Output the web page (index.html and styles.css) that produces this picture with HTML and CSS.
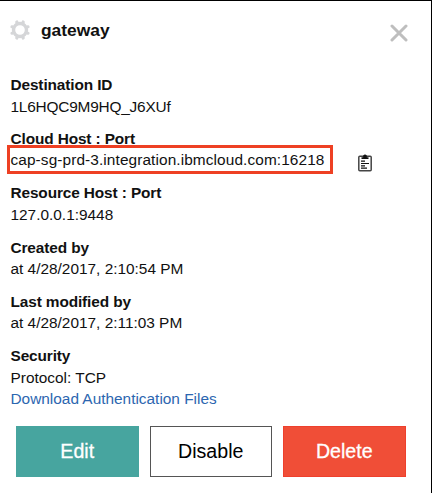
FILE: index.html
```html
<!DOCTYPE html>
<html lang="en">
<head>
<meta charset="utf-8">
<title>gateway</title>
<link rel="stylesheet" href="styles.css">
</head>
<body>
<main class="panel">
  <header class="header">
    <svg class="gear" viewBox="-10 -10 20 20">
      <circle r="6.5" fill="none" stroke="#d5d6d8" stroke-width="3.4"/>
      <g stroke="#d5d6d8" stroke-width="3.2" stroke-linecap="round">
        <path d="M3 -7.2L3.2 -8M7.2 -3L8 -3.2M7.2 3L8 3.2M3 7.2L3.2 8M-3 7.2L-3.2 8M-7.2 3L-8 3.2M-7.2 -3L-8 -3.2M-3 -7.2L-3.2 -8"/>
      </g>
    </svg>
    <h1 class="title">gateway</h1>
    <svg class="close" viewBox="0 0 18 18"><path d="M2 2L16 16M16 2L2 16"/></svg>
  </header>
  <dl class="details">
    <div class="item"><dt>Destination ID</dt><dd class="id">1L6HQC9M9HQ_J6XUf</dd></div>
    <div class="item"><dt>Cloud Host : Port</dt>
      <dd class="host-row"><span class="host">cap-sg-prd-3.integration.ibmcloud.com:16218</span>
        <svg class="clipboard" viewBox="0 0 14 18">
          <rect x=".8" y="2.2" width="12.4" height="14.6" rx="1" fill="#fff" stroke="#444" stroke-width="1.5"/>
          <path d="M3.5 5V3.2H5.2V1.6Q7 -.8 8.8 1.6V3.2H10.5V5Z" fill="#111"/>
          <path d="M3 7.2H7M3 9.5H11M3 11.9H7M3 14.2H9" stroke="#111" stroke-width="1.2"/>
        </svg>
      </dd></div>
    <div class="item"><dt>Resource Host : Port</dt><dd>127.0.0.1:9448</dd></div>
    <div class="item"><dt>Created by</dt><dd>at 4/28/2017, 2:10:54 PM</dd></div>
    <div class="item"><dt>Last modified by</dt><dd>at 4/28/2017, 2:11:03 PM</dd></div>
    <div class="item"><dt>Security</dt><dd>Protocol: TCP</dd><dd><a class="link">Download Authentication Files</a></dd></div>
  </dl>
  <footer class="actions">
    <button class="btn edit">Edit</button>
    <button class="btn disable">Disable</button>
    <button class="btn delete">Delete</button>
  </footer>
</main>
</body>
</html>
```

FILE: styles.css
```css
* { box-sizing: border-box; }
body { margin: 0; background: #fff; color: #111; font: 15.4px/21.6px "Liberation Sans", Arial, sans-serif; }
.panel { height: 493px; border-top: 1px solid #000; border-right: 1px solid #000; overflow: hidden; }
.header { display: flex; align-items: center; height: 58px; padding: 0 23px 0 10px; }
.gear { width: 20px; height: 20px; }
.title { margin: 0 0 0 11px; font-size: 17.4px; line-height: 22px; }
.close { width: 18px; height: 18px; margin: 5px 0 0 auto; fill: none; stroke: #bebebe; stroke-width: 3; stroke-linecap: round; }
.details { margin: 15px 0 0 10.5px; }
.item { margin-bottom: 11px; }
dt { font-weight: bold; letter-spacing: -.12px; }
dd { margin: 0; white-space: nowrap; }
.id { letter-spacing: -.2px; }
.host-row { display: flex; align-items: center; }
.host { width: 326px; height: 29px; margin: -5px 0 -2.4px -3.5px; padding: 1px 0 0 .5px; border: 3px solid #ee4023; letter-spacing: .1px; }
.clipboard { width: 14px; height: 18px; margin: 2px 0 -2.4px 25px; }
.link { color: #2c66b0; }
.actions { display: flex; gap: 11px; margin: 5px 0 0 16px; padding-top: 5px; }
.btn { width: 122.5px; height: 51px; padding: 0; border: 1px solid #47a59f; font: 19.6px "Liberation Sans", Arial, sans-serif; }
.edit { background: #47a59f; color: #fff; -webkit-text-stroke: .3px #fff; }
.disable { background: #fff; border-color: #555; color: #000; }
.delete { background: #f04e37; border-color: #ee402d; color: #fff; -webkit-text-stroke: .3px #fff; }
```
